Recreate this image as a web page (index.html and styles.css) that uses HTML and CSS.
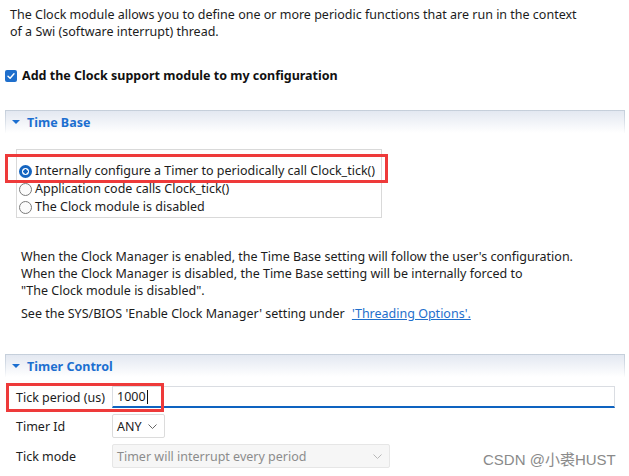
FILE: index.html
```html
<!DOCTYPE html>
<html lang="en">
<head>
<meta charset="utf-8">
<title>Clock module</title>
<link rel="stylesheet" href="styles.css">
</head>
<body>
<div class="page">
  <p class="intro">The Clock module allows you to define one or more periodic functions that are run in the context<br>of a Swi (software interrupt) thread.</p>

  <div class="enable">
    <span class="checkbox"><svg viewBox="0 0 12 12" width="12" height="12"><path d="M3 6.2 L5.1 8.2 L9 3.8" fill="none" stroke="#fff" stroke-width="1.4" stroke-linecap="round" stroke-linejoin="round"/></svg></span>
    <span class="enable-label">Add the Clock support module to my configuration</span>
  </div>

  <section class="panel panel-tb">
    <div class="panel-head"><span class="tri"></span>Time Base</div>
    <div class="panel-body">
      <div class="radio-group">
        <div class="radio-row"><span class="radio radio-on"></span>Internally configure a Timer to periodically call Clock_tick()</div>
        <div class="radio-row"><span class="radio"></span>Application code calls Clock_tick()</div>
        <div class="radio-row"><span class="radio"></span>The Clock module is disabled</div>
        <div class="mark mark-radio"></div>
      </div>
    </div>
  </section>

  <div class="note">
    <p>When the Clock Manager is enabled, the Time Base setting will follow the user's configuration.<br>When the Clock Manager is disabled, the Time Base setting will be internally forced to<br>"The Clock module is disabled".</p>
    <p class="see">See the SYS/BIOS 'Enable Clock Manager' setting under <a class="link" href="#">'Threading Options'.</a></p>
  </div>

  <section class="panel panel-tc">
    <div class="panel-head"><span class="tri"></span>Timer Control</div>
    <div class="form">
      <div class="form-row">
        <span class="form-label">Tick period (us)</span>
        <div class="text-input">1000<span class="caret"></span></div>
        <div class="mark mark-tick"></div>
      </div>
      <div class="form-row">
        <span class="form-label">Timer Id</span>
        <div class="select select-id">ANY<svg class="chev" viewBox="0 0 9 5" width="9" height="5"><path d="M0.5 0.5 L4.5 4.5 L8.5 0.5" fill="none" stroke="#666" stroke-width="1"/></svg></div>
      </div>
      <div class="form-row">
        <span class="form-label">Tick mode</span>
        <div class="select select-mode">Timer will interrupt every period<svg class="chev" viewBox="0 0 9 5" width="9" height="5"><path d="M0.5 0.5 L4.5 4.5 L8.5 0.5" fill="none" stroke="#b8b8b8" stroke-width="1"/></svg></div>
      </div>
    </div>
  </section>

  <div class="watermark">CSDN @小裘HUST</div>
</div>
</body>
</html>
```

FILE: styles.css
```css
* { box-sizing: border-box; }

html, body {
  margin: 0;
  padding: 0;
  background: #ffffff;
}

body {
  font-family: "Noto Sans", "Noto Sans CJK SC", sans-serif;
  font-size: 12.5px;
  color: #1c1c1c;
  width: 629px;
  height: 476px;
  overflow: hidden;
}

.page {
  position: relative;
  height: 476px;
}

p { margin: 0; }

.intro {
  padding: 6px 10px 0;
  line-height: 17px;
}

.enable {
  display: flex;
  align-items: center;
  gap: 5px;
  margin-top: 27px;
  padding-left: 5px;
  height: 17px;
}

.checkbox {
  width: 12px;
  height: 12px;
  border-radius: 2px;
  background: #1f6fcc;
  display: flex;
}

.enable-label {
  font-weight: 700;
  font-size: 12.5px;
  color: #111;
}

.panel {
  margin: 0 4px 0 5px;
}

.panel-tb { margin-top: 26px; }
.panel-tc { margin-top: 32px; position: relative; }

.panel-head {
  height: 23px;
  display: flex;
  align-items: center;
  gap: 7px;
  padding-left: 6px;
  font-weight: 700;
  font-size: 12.5px;
  color: #1c6fd0;
  border: 1px solid;
  border-bottom: 0;
  border-image: linear-gradient(to bottom, #c4ceda, rgba(255,255,255,0)) 1;
  background: linear-gradient(to bottom, #e3e8f1, #ffffff);
}

.tri {
  width: 0;
  height: 0;
  border-left: 4px solid transparent;
  border-right: 4px solid transparent;
  border-top: 4px solid #1c6fd0;
}

.panel-body {
  padding: 16px 0 0 11px;
}

.radio-group {
  position: relative;
  width: 366px;
  height: 69px;
  border: 1px solid #d9d9d9;
  padding: 12px 0 0 2px;
}

.radio-row {
  display: flex;
  align-items: center;
  gap: 3px;
  height: 18px;
  line-height: 18px;
}

.radio {
  width: 13px;
  height: 13px;
  border-radius: 50%;
  border: 1px solid #7a7a7a;
  background: #fbfbfb;
}

.radio-on {
  border: 3px solid #1565c0;
  background: radial-gradient(circle, #1565c0 0 2px, #ffffff 2.4px);
}

.mark {
  position: absolute;
  border: 3px solid #ee3a3a;
  pointer-events: none;
}

.mark-radio {
  left: -12px;
  top: 4px;
  width: 383px;
  height: 29px;
}

.note {
  padding: 30px 0 0 21px;
  line-height: 17px;
}

.see {
  margin-top: 6px;
}

.link {
  color: #1f6fcc;
  text-decoration: underline;
  margin-left: 4px;
}

.form {
  padding: 9px 10px 0 11px;
  display: flex;
  flex-direction: column;
  gap: 6px;
}

.form-row {
  position: relative;
  display: flex;
  align-items: center;
}

.form-label {
  width: 96px;
  flex: none;
}

.text-input {
  flex: 1;
  height: 22px;
  border: 1px solid #dadde2;
  border-bottom: 2px solid #0e63c0;
  padding: 0 4px;
  display: flex;
  align-items: center;
}

.caret {
  display: inline-block;
  width: 1px;
  height: 14px;
  background: #111;
  margin-left: 1px;
}

.mark-tick {
  left: -10px;
  top: -3px;
  width: 158px;
  height: 29px;
}

.select {
  height: 24px;
  border: 1px solid #dcdcdc;
  border-radius: 2px;
  display: flex;
  align-items: center;
  justify-content: space-between;
  padding: 0 7px 0 4px;
  background: #ffffff;
}

.select-id {
  width: 53px;
}

.select-mode {
  width: 278px;
  background: #f6f6f6;
  border-color: #e6e6e6;
  color: #8c8c8c;
}

.watermark {
  position: absolute;
  left: 483px;
  top: 448px;
  font-size: 15px;
  color: #8a8a8a;
  font-family: "Liberation Sans", "Noto Sans CJK SC", sans-serif;
}
```
